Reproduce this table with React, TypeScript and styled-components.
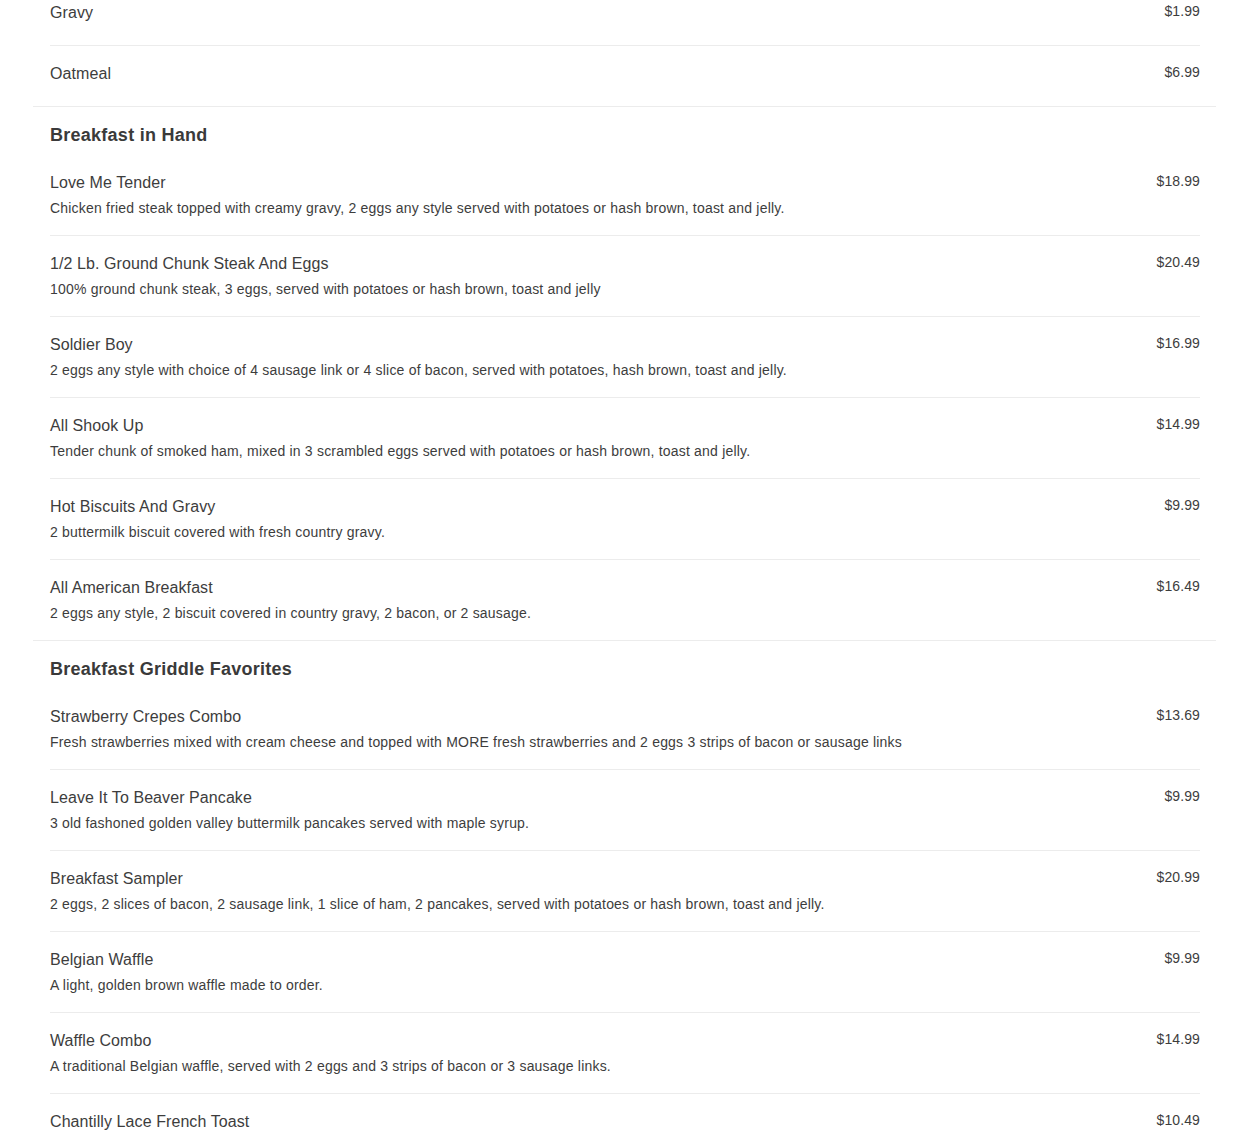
import React from "react";
import styled, { createGlobalStyle } from "styled-components";

const Global = createGlobalStyle`
  html, body { margin: 0; padding: 0; background: #fff; }
  body { font-family: "Liberation Sans", Arial, sans-serif; color: #3d3d3d; }
`;

type Item = { name: string; desc?: string; price: string };
type Section = { title?: string; items: Item[] };

const sections: Section[] = [
  {
    items: [
      { name: "Gravy", price: "$1.99" },
      { name: "Oatmeal", price: "$6.99" },
    ],
  },
  {
    title: "Breakfast in Hand",
    items: [
      { name: "Love Me Tender", desc: "Chicken fried steak topped with creamy gravy, 2 eggs any style served with potatoes or hash brown, toast and jelly.", price: "$18.99" },
      { name: "1/2 Lb. Ground Chunk Steak And Eggs", desc: "100% ground chunk steak, 3 eggs, served with potatoes or hash brown, toast and jelly", price: "$20.49" },
      { name: "Soldier Boy", desc: "2 eggs any style with choice of 4 sausage link or 4 slice of bacon, served with potatoes, hash brown, toast and jelly.", price: "$16.99" },
      { name: "All Shook Up", desc: "Tender chunk of smoked ham, mixed in 3 scrambled eggs served with potatoes or hash brown, toast and jelly.", price: "$14.99" },
      { name: "Hot Biscuits And Gravy", desc: "2 buttermilk biscuit covered with fresh country gravy.", price: "$9.99" },
      { name: "All American Breakfast", desc: "2 eggs any style, 2 biscuit covered in country gravy, 2 bacon, or 2 sausage.", price: "$16.49" },
    ],
  },
  {
    title: "Breakfast Griddle Favorites",
    items: [
      { name: "Strawberry Crepes Combo", desc: "Fresh strawberries mixed with cream cheese and topped with MORE fresh strawberries and 2 eggs 3 strips of bacon or sausage links", price: "$13.69" },
      { name: "Leave It To Beaver Pancake", desc: "3 old fashoned golden valley buttermilk pancakes served with maple syrup.", price: "$9.99" },
      { name: "Breakfast Sampler", desc: "2 eggs, 2 slices of bacon, 2 sausage link, 1 slice of ham, 2 pancakes, served with potatoes or hash brown, toast and jelly.", price: "$20.99" },
      { name: "Belgian Waffle", desc: "A light, golden brown waffle made to order.", price: "$9.99" },
      { name: "Waffle Combo", desc: "A traditional Belgian waffle, served with 2 eggs and 3 strips of bacon or 3 sausage links.", price: "$14.99" },
      { name: "Chantilly Lace French Toast", price: "$10.49" },
    ],
  },
];

const Page = styled.div`
  margin: -15px 34px 0 33px;
`;

const SectionBox = styled.section`
  padding: 0 16px 0 17px;
  border-bottom: 1px solid #ececec;
`;

const Heading = styled.h2`
  margin: 0;
  padding: 17px 0 9px;
  font-size: 18px;
  line-height: 22px;
  font-weight: 700;
  letter-spacing: 0.26px;
  color: #3a3a3a;
`;

const Row = styled.div`
  display: flex;
  justify-content: space-between;
  align-items: flex-start;
  padding: 16px 0 17px;
  border-bottom: 1px solid #ececec;
  &:last-child { border-bottom: none; }
`;

const Info = styled.div`
  display: flex;
  flex-direction: column;
`;

const Name = styled.div`
  font-size: 16px;
  line-height: 24px;
  letter-spacing: 0.08px;
  color: #3d3d3d;
`;

const Desc = styled.div`
  margin-top: 3px;
  font-size: 14px;
  line-height: 20px;
  letter-spacing: 0.2px;
  color: #3d3d3d;
  &:empty { height: 0; }
`;

const Price = styled.div`
  font-size: 14px;
  line-height: 20px;
  letter-spacing: 0.1px;
  color: #3d3d3d;
  white-space: nowrap;
`;

export default function App() {
  return (
    <>
      <Global />
      <Page>
        {sections.map((s, i) => (
          <SectionBox key={i}>
            {s.title && <Heading>{s.title}</Heading>}
            {s.items.map((it) => (
              <Row key={it.name}>
                <Info>
                  <Name>{it.name}</Name>
                  <Desc>{it.desc ?? ""}</Desc>
                </Info>
                <Price>{it.price}</Price>
              </Row>
            ))}
          </SectionBox>
        ))}
      </Page>
    </>
  );
}
